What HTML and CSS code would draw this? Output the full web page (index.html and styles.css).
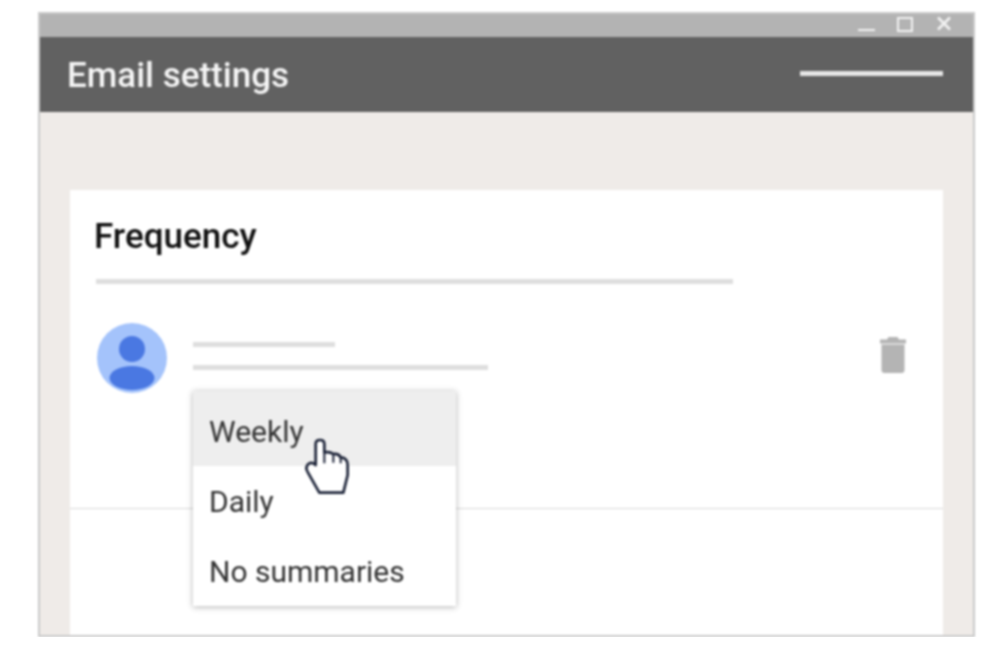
FILE: index.html
```html
<!DOCTYPE html>
<html>
<head>
    <title>Email settings</title>
    <link rel="stylesheet" href="styles.css">
</head>
<body>
    <div class="window">
        <div class="titlebar">
            <span class="win-min"></span>
            <span class="win-max"></span>
            <svg class="win-close" width="16" height="15" viewBox="0 0 16 15">
                <path d="M2 1.5 L14 13.5 M14 1.5 L2 13.5" stroke="#f2f2f2" stroke-width="2.6" fill="none"/>
            </svg>
        </div>
        <div class="header">
            <h1>Email settings</h1>
            <span class="header-line"></span>
        </div>
        <div class="content">
            <div class="card">
                <h2>Frequency</h2>
                <div class="rule"></div>
                <div class="person">
                    <svg class="avatar" width="70" height="70" viewBox="0 0 70 70">
                        <circle cx="35" cy="35" r="35" fill="#a4c3fb"/>
                        <circle cx="35" cy="26" r="13" fill="#4a78e2"/>
                        <ellipse cx="35" cy="55" rx="22.5" ry="12" fill="#4a78e2"/>
                    </svg>
                    <div class="person-lines">
                        <span class="line-short"></span>
                        <span class="line-long"></span>
                    </div>
                    <svg class="trash" width="28" height="38" viewBox="0 0 28 38">
                        <path d="M9.500 1 H18.500 L20 3.500 H27 V7.500 H1 V3.500 H8 Z" fill="#b4b4b4"/>
                        <path d="M2.500 8.500 H25.500 V34 Q25.500 37 22.500 37 H5.500 Q2.500 37 2.500 34 Z" fill="#b4b4b4"/>
                    </svg>
                </div>
                <div class="divider"></div>

                <ul class="menu">
                    <li class="active">Weekly</li>
                    <li>Daily</li>
                    <li>No summaries</li>
                </ul>
                <svg class="cursor" width="100" height="90" viewBox="0 0 300 270">
                    <path d="M107 135 V72 Q107 60 120 60 Q133 60 133 72 V97 Q150 94 160 102 Q176 100 182 112 Q203 114 203 135 V165 L190 218 H118 L84 158 Q74 142 85 132 Q97 124 107 135 Z" fill="#fff" stroke="#1c2338" stroke-width="8" stroke-linejoin="round"/>
                    <path d="M133 97 V130 M160 102 V128 M182 112 V130" fill="none" stroke="#1c2338" stroke-width="6"/>
                </svg>
            </div>
        </div>
    </div>
</body>
</html>
```

FILE: styles.css
```css
body {
    margin: 0;
    background-color: #ffffff;
    font-family: Roboto, "Liberation Sans", sans-serif;
}
.window {
    width: 933px;
    height: 621px;
    margin: 12px 0 0 38px;
    border: 2px solid #c9c9c9;
    display: flex;
    flex-direction: column;
    overflow: hidden;
    filter: blur(0.8px); /* the shot is a scaled-up image, edges are soft */
}
.titlebar {
    height: 23px;
    flex-shrink: 0;
    background-color: #b3b3b3;
    position: relative;
}
.win-min {
    position: absolute;
    left: 818px;
    top: 15px;
    width: 17px;
    height: 2px;
    background-color: #f2f2f2;
}
.win-max {
    position: absolute;
    left: 857px;
    top: 3px;
    width: 12px;
    height: 11px;
    border: 2px solid #f2f2f2;
}
.win-close {
    position: absolute;
    left: 896px;
    top: 2px;
}
.header {
    height: 75px;
    flex-shrink: 0;
    background-color: #616161;
    display: flex;
    align-items: center;
    justify-content: space-between;
    padding: 0 30px 0 27px;
}
.header h1 {
    margin: 2px 0 0 0;
    color: #f5f5f5;
    font-size: 35px;
    font-weight: 500;
}
.header-line {
    width: 143px;
    height: 5px;
    margin-bottom: 3px;
    background-color: #e6e6e6;
}
.content {
    flex: 1;
    background-color: #efebe8;
    padding: 78px 30px 0 30px;
}
.card {
    height: 100%;
    background-color: #ffffff;
    position: relative;
}
.card h2 {
    margin: 0;
    padding: 27px 0 0 24px;
    height: 62px;
    color: #111111;
    font-size: 35px;
    font-weight: 500;
    line-height: 40px;
}
.rule {
    width: 637px;
    height: 5px;
    margin: 0 0 0 26px;
    background-color: #dedede;
}
.person {
    display: flex;
    align-items: flex-start;
    height: 224px;
    padding: 39px 36px 0 27px;
    box-sizing: border-box;
}
.avatar {
    flex-shrink: 0;
}
.person-lines {
    display: flex;
    flex-direction: column;
    gap: 18px;
    margin: 19px 0 0 26px;
    flex: 1;
}
.line-short {
    width: 142px;
    height: 5px;
    background-color: #dedede;
}
.line-long {
    width: 295px;
    height: 5px;
    background-color: #dedede;
}
.trash {
    margin-top: 13px;
}
.divider {
    height: 1px;
    background-color: #d8d8d8;
}
.menu {
    position: absolute;
    left: 123px;
    top: 201px;
    width: 263px;
    margin: 0;
    padding: 0;
    list-style: none;
    background-color: #ffffff;
    box-shadow: 0 1px 6px rgba(0, 0, 0, 0.3);
    color: #333333;
    font-size: 30px;
}
.menu li {
    height: 70px;
    line-height: 72px;
    padding-left: 16px;
}
.menu li.active {
    height: 75px;
    line-height: 82px;
    background-color: #eeeeee;
}
.cursor {
    position: absolute;
    left: 210px;
    top: 230px;
}
```
